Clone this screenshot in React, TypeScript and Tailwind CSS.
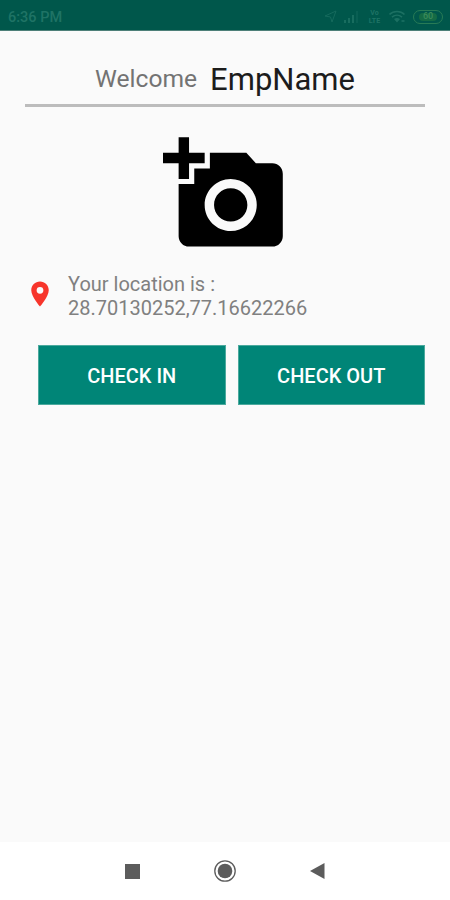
import type { ReactNode } from "react";

function StatusBar() {
  return (
    <header className="flex h-[31px] items-center justify-between border-b border-[#4d7f78] bg-[#00574b] pt-[3px] pr-[7px] pl-2 text-[#1f7365]">
      <span className="pt-[3px] text-[14.5px] leading-none font-medium">6:36 PM</span>
      <div className="flex items-center gap-[7px]">
        <svg width="13" height="13" viewBox="0 0 13 13" fill="none" stroke="currentColor" opacity=".7">
          <path d="M1 6 12 1 8 12 6.500 7z" />
        </svg>
        <svg width="16" height="13" viewBox="0 0 16 13" fill="currentColor" opacity=".8">
          <path d="M0 10h2v3H0zM4 8h2v5H4zM8 5h2v8H8z" />
          <path d="M12 1h2v12h-2z" opacity=".4" />
        </svg>
        <div className="flex w-[15px] flex-col items-center text-[7px] leading-[8px] font-bold">
          <span className="block h-2">Vo</span>
          <span className="block h-2">LTE</span>
        </div>
        <svg width="17" height="13" viewBox="0 0 17 13" fill="none" stroke="currentColor" strokeWidth="1.600" opacity=".9">
          <path d="M.5 4.500C4.500.5 11.500.5 15.500 4.500M3 7.200C6 4.500 10 4.500 13 7.200" />
          <path d="M5 9C7 7.500 9 7.500 11 9L8 12.500z" fill="currentColor" stroke="none" />
          <path d="M12.500 11h3" />
        </svg>
        <div className="flex h-[14px] w-[30px] items-center justify-center rounded-full border border-[#287b56] p-[2px]">
          <span className="flex h-full w-[18px] items-center justify-center rounded-full bg-[#156b45] text-[9px] leading-none font-medium text-[#3b8a5b]">
            60
          </span>
        </div>
      </div>
    </header>
  );
}

function ActionButton({ children }: { children: ReactNode }) {
  return (
    <button className="h-[60px] flex-1 border border-[#4ba99d] bg-[#008577] pt-[2px] text-[20px] font-medium text-white">
      {children}
    </button>
  );
}

function NavigationBar() {
  return (
    <nav className="flex h-[58px] items-center justify-center gap-[74px] bg-white text-[#5c5c5c]">
      <svg width="15" height="15" viewBox="0 0 15 15">
        <path d="M0 0h15v15H0z" fill="currentColor" />
      </svg>
      <svg width="22" height="22" viewBox="0 0 22 22">
        <circle cx="11" cy="11" r="10.200" fill="none" stroke="currentColor" strokeWidth="1.300" />
        <circle cx="11" cy="11" r="7.300" fill="currentColor" />
      </svg>
      <svg width="15" height="16" viewBox="0 0 15 16">
        <path d="M0 8 14.500 0v16z" fill="currentColor" />
      </svg>
    </nav>
  );
}

export default function App() {
  return (
    <div className="flex h-[900px] w-[450px] flex-col bg-[#fafafa] font-[Roboto,sans-serif]">
      <StatusBar />
      <main className="flex-1 px-[25px]">
        <div className="flex h-[76px] items-center justify-center gap-[13px] border-b-[3px] border-[#bcbcbc] pt-[23px] whitespace-nowrap">
          <span className="text-[24.6px] leading-[30px] text-[#737373]">Welcome</span>
          <span className="pt-px text-[31px] leading-[38px] text-[#1c1c1c]">EmpName</span>
        </div>
        <svg className="mt-[25px] ml-[138px]" width="125" height="125" viewBox="0 0 24 24">
          <path d="M3 4V1h2v3h3v2H5v3H3V6H0V4h3zm3 6V7h3V4h7l1.830 2H21c1.100 0 2 .9 2 2v12c0 1.100-.9 2-2 2H5c-1.100 0-2-.9-2-2V10h3zm7 9c2.760 0 5-2.240 5-5s-2.240-5-5-5-5 2.240-5 5 2.240 5 5 5zm-3.200-5c0 1.770 1.430 3.200 3.200 3.200s3.200-1.430 3.200-3.200-1.430-3.200-3.200-3.200-3.200 1.430-3.200 3.200z" />
        </svg>
        <div className="mt-[15px] flex items-center gap-[13px]">
          <svg className="mb-[4px]" width="30" height="30" viewBox="0 0 24 24">
            <path
              d="M12 2C8.130 2 5 5.130 5 9c0 5.250 7 13 7 13s7-7.750 7-13c0-3.870-3.130-7-7-7zm0 9.700a2.700 2.700 0 0 1 0-5.400 2.700 2.700 0 0 1 0 5.400z"
              fill="#f7352b"
            />
          </svg>
          <p className="text-[20px] leading-6 text-[#808080]">
            Your location is :
            <br />
            28.70130252,77.16622266
          </p>
        </div>
        <div className="mt-[25px] flex gap-3 pl-[13px]">
          <ActionButton>CHECK IN</ActionButton>
          <ActionButton>CHECK OUT</ActionButton>
        </div>
      </main>
      <NavigationBar />
    </div>
  );
}
